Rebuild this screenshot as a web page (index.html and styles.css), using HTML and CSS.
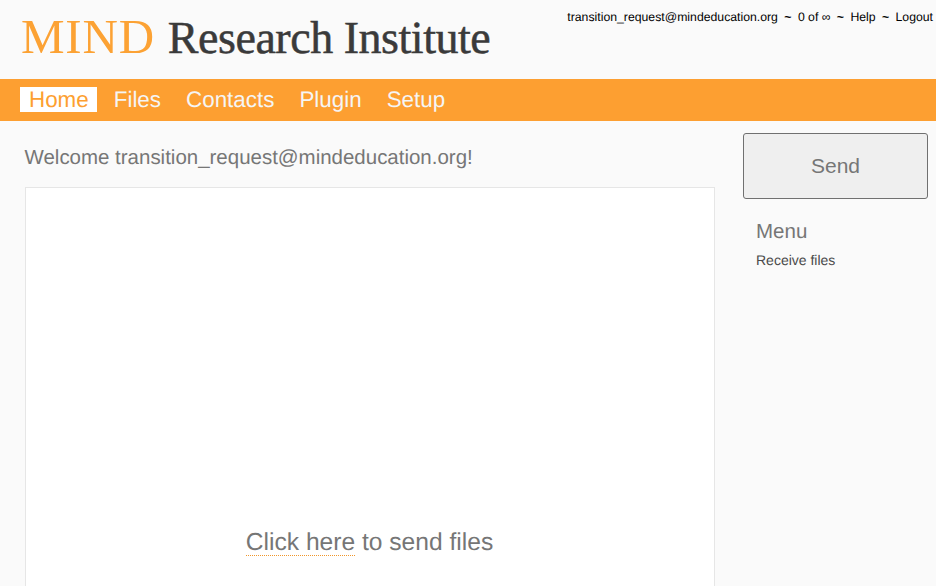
FILE: index.html
```html
<!DOCTYPE html>
<html>
<head>
<meta charset="utf-8">
<title>MIND Research Institute</title>
<link rel="stylesheet" href="styles.css">
</head>
<body>
<header class="header">
  <div class="logo"><span class="logo-mind">MIND</span><span class="logo-rest">Research Institute</span></div>
  <div class="topbar">
    <a>transition_request@mindeducation.org</a><span class="sep">~</span><span>0 of ∞</span><span class="sep">~</span><a>Help</a><span class="sep">~</span><a>Logout</a>
  </div>
</header>
<nav class="nav">
  <a class="nav-item active">Home</a>
  <a class="nav-item">Files</a>
  <a class="nav-item">Contacts</a>
  <a class="nav-item">Plugin</a>
  <a class="nav-item">Setup</a>
</nav>
<div class="page">
  <main class="main">
    <h1 class="welcome">Welcome transition_request@mindeducation.org!</h1>
    <div class="dropzone">
      <p class="drop-text"><a class="drop-link">Click here</a> to send files</p>
    </div>
  </main>
  <aside class="side">
    <button class="send">Send</button>
    <h2 class="menu-title">Menu</h2>
    <a class="menu-link">Receive files</a>
  </aside>
</div>
</body>
</html>
```
FILE: styles.css
```css
* { box-sizing: border-box; }
html, body { margin: 0; height: 100%; overflow: hidden; }
body { background: #fafafa; font-family: "Liberation Sans", Arial, sans-serif; color: #767676; text-rendering: geometricPrecision; }
.header { height: 79px; display: flex; justify-content: space-between; align-items: flex-start; padding: 0 3px 0 21px; }
.logo { font-family: "Liberation Serif", "Times New Roman", serif; line-height: 52px; margin-top: 11px; white-space: nowrap; display: flex; align-items: baseline; }
.logo-mind { color: #fca234; font-size: 49px; letter-spacing: 0.8px; }
.logo-rest { color: #3a3a3a; font-size: 46px; letter-spacing: -0.47px; margin-left: 13px; -webkit-text-stroke: 0.5px #3a3a3a; }
.topbar { display: flex; font-size: 12.25px; line-height: 14px; color: #000; padding-top: 10px; white-space: nowrap; }
.sep { margin: 0 6.4px; font-weight: bold; }
.nav { height: 42px; background: #fd9f31; display: flex; align-items: center; padding: 0 8px 2px 20px; gap: 7px; }
.nav-item { color: #f5f5f5; font-size: 22.4px; line-height: 25px; padding: 0 9px; }
.nav-item.active { background: #fff; color: #fd9f31; padding-right: 8px; margin-right: 1px; }
.page { display: flex; padding: 0 8px 0 25px; }
.main { width: 690px; flex: none; }
.welcome { margin: 0 0 0 -0.5px; padding-top: 25px; font-size: 20.48px; line-height: 24px; height: 66px; font-weight: normal; color: #767676; }
.dropzone { background: #fff; border: 1px solid #e6e6e6; height: 420px; display: flex; justify-content: center; padding: 341px 1px 0 0; }
.drop-text { margin: 0; font-size: 24.6px; line-height: 28px; height: 28px; }
.drop-link { border-bottom: 1px dotted #f0962b; display: inline-block; height: 27px; }
.side { margin-left: 28px; width: 185px; padding-top: 12px; display: flex; flex-direction: column; align-items: flex-start; }
.send { width: 185px; height: 66px; background: #efefef; border: 1px solid #707070; border-radius: 3px; font: 21px "Liberation Sans", Arial, sans-serif; color: #767676; padding: 0; }
.menu-title { margin: 21px 0 0 13px; font-size: 20.5px; line-height: 24px; font-weight: normal; color: #767676; }
.menu-link { margin: 7px 0 0 13px; font-size: 14px; line-height: 18px; color: #4a4a4a; }
```
